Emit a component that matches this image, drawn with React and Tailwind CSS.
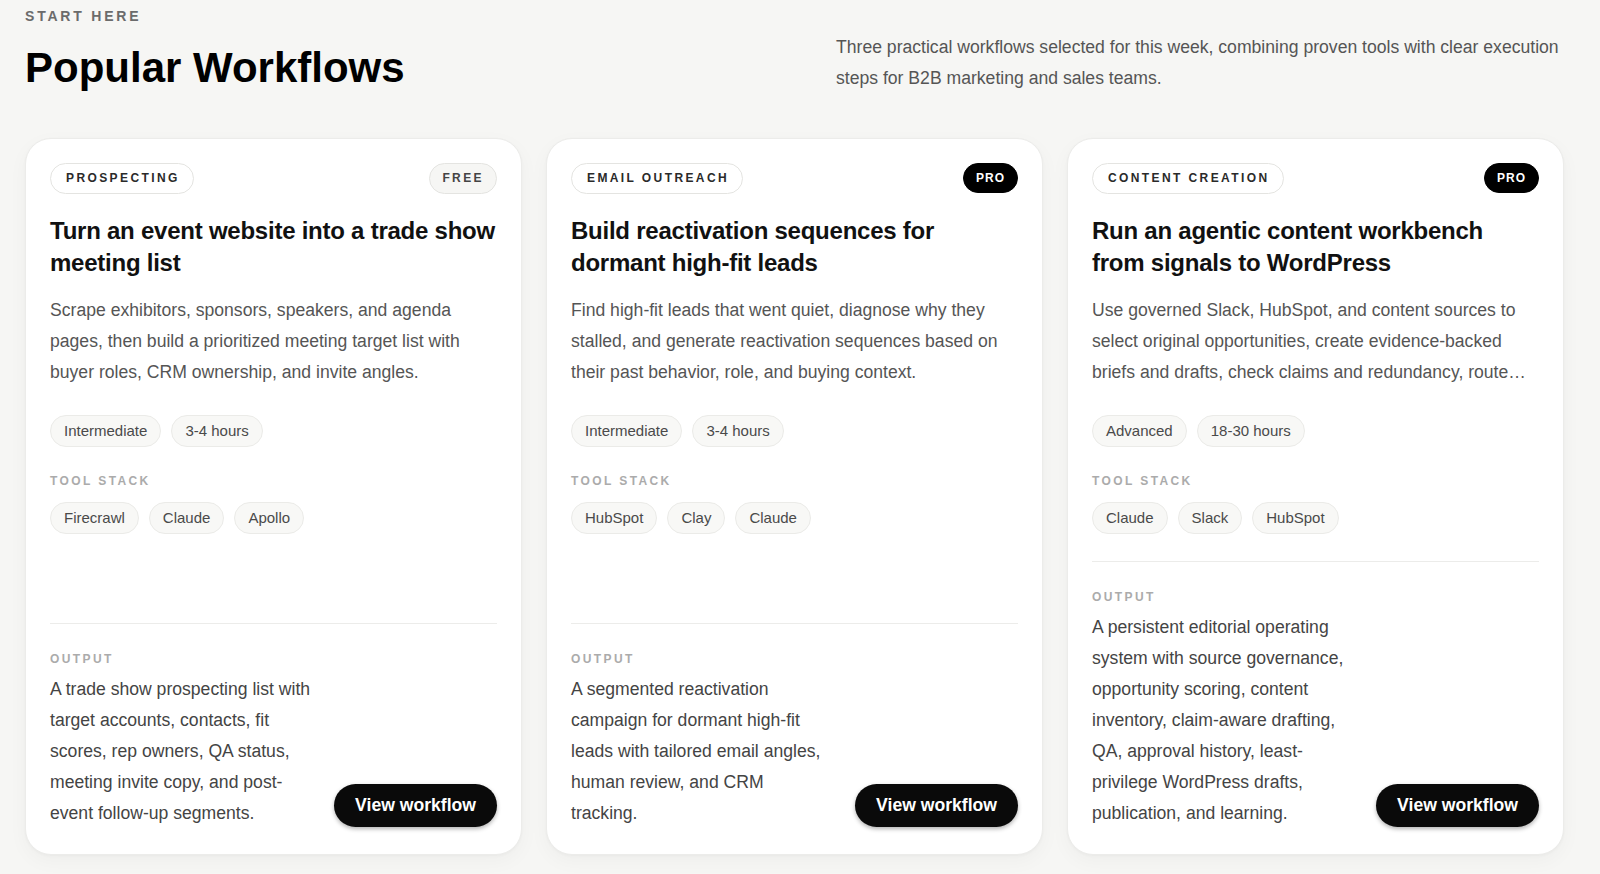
import React from "react";

const cards = [
  {
    category: "PROSPECTING",
    tier: "FREE",
    title: "Turn an event website into a trade show meeting list",
    desc: "Scrape exhibitors, sponsors, speakers, and agenda pages, then build a prioritized meeting target list with buyer roles, CRM ownership, and invite angles.",
    meta: ["Intermediate", "3-4 hours"],
    tools: ["Firecrawl", "Claude", "Apollo"],
    output:
      "A trade show prospecting list with target accounts, contacts, fit scores, rep owners, QA status, meeting invite copy, and post-event follow-up segments.",
  },
  {
    category: "EMAIL OUTREACH",
    tier: "PRO",
    title: "Build reactivation sequences for dormant high-fit leads",
    desc: "Find high-fit leads that went quiet, diagnose why they stalled, and generate reactivation sequences based on their past behavior, role, and buying context.",
    meta: ["Intermediate", "3-4 hours"],
    tools: ["HubSpot", "Clay", "Claude"],
    output:
      "A segmented reactivation campaign for dormant high-fit leads with tailored email angles, human review, and CRM tracking.",
  },
  {
    category: "CONTENT CREATION",
    tier: "PRO",
    title: "Run an agentic content workbench from signals to WordPress",
    desc: "Use governed Slack, HubSpot, and content sources to select original opportunities, create evidence-backed briefs and drafts, check claims and redundancy, route approvals, and publish least-privilege WordPress drafts.",
    meta: ["Advanced", "18-30 hours"],
    tools: ["Claude", "Slack", "HubSpot"],
    output:
      "A persistent editorial operating system with source governance, opportunity scoring, content inventory, claim-aware drafting, QA, approval history, least-privilege WordPress drafts, publication, and learning.",
  },
];

function Chip({ children }) {
  return (
    <span className="flex h-8 items-center rounded-full border border-[#ebebe8] bg-[#f8f8f6] px-[13px] text-[15px] text-[#4a4a4a]">
      {children}
    </span>
  );
}

function Card({ c }) {
  return (
    <div className="flex flex-col rounded-[26px] border border-[#ececea] bg-white px-6 pb-[25px] pt-6 shadow-[0_1px_3px_rgba(0,0,0,0.03),0_6px_20px_rgba(0,0,0,0.035)]">
      <div className="flex items-center justify-between">
        <span className="flex h-[31px] items-center rounded-full border border-[#e4e4e1] bg-white pl-[15px] pr-[13px] text-[12px] font-bold tracking-[0.2em] text-[#2a2a2a]">
          {c.category}
        </span>
        {c.tier === "PRO" ? (
          <span className="flex h-[30px] items-center rounded-full border border-black bg-black px-[12px] text-[12px] font-bold tracking-[0.08em] text-white">
            PRO
          </span>
        ) : (
          <span className="flex h-[31px] items-center rounded-full border border-[#e4e4e1] bg-[#f6f6f4] px-[12px] text-[12px] font-bold tracking-[0.2em] text-[#444]">
            {c.tier}
          </span>
        )}
      </div>
      <h3 className="mt-[21px] text-[24px] font-bold leading-[32.6px] tracking-[-0.01em] text-[#111]">
        {c.title}
      </h3>
      <p className="mt-[15px] line-clamp-3 text-[17.6px] leading-[31px] text-[#555]">
        {c.desc}
      </p>
      <div className="mt-[27px] flex gap-[10px]">
        {c.meta.map((m) => (
          <Chip key={m}>{m}</Chip>
        ))}
      </div>
      <div className="mt-[26px] text-[12px] font-bold leading-4 tracking-[0.2em] text-[#ababab]">
        TOOL STACK
      </div>
      <div className="mt-[13.5px] flex gap-[10px]">
        {c.tools.map((t) => (
          <Chip key={t}>{t}</Chip>
        ))}
      </div>
      <div className="mt-auto pt-[26.5px]">
        <div className="border-t border-[#ececea] pt-[27px]">
          <div className="flex items-end justify-between">
            <div className="w-[263px]">
              <div className="text-[12px] font-bold leading-4 tracking-[0.2em] text-[#ababab]">
                OUTPUT
              </div>
              <p className="mt-[7px] text-[17.6px] leading-[31px] text-[#444]">
                {c.output}
              </p>
            </div>
            <button className="mb-[2px] flex h-[43px] shrink-0 items-center rounded-full bg-[#0a0a0a] px-[21px] text-[17.6px] font-bold text-white shadow-[0_2px_4px_rgba(0,0,0,0.3)]">
              View workflow
            </button>
          </div>
        </div>
      </div>
    </div>
  );
}

export default function App() {
  return (
    <div
      className="min-h-[874px] w-[1600px] bg-[#f6f6f4] pl-[25px] pt-[6px]"
      style={{ fontFamily: '"Liberation Sans", Arial, sans-serif' }}
    >
      <div className="w-[1539px]">
        <div className="flex items-start justify-between">
          <div>
            <div className="text-[14px] font-bold leading-5 tracking-[0.2em] text-[#6b6b6b]">
              START HERE
            </div>
            <h1 className="mt-[21px] text-[42px] font-bold leading-[42px] text-black">
              Popular Workflows
            </h1>
          </div>
          <p className="mt-[26px] w-[728px] text-[17.6px] leading-[30.8px] text-[#555]">
            Three practical workflows selected for this week, combining proven tools with clear execution steps for B2B marketing and sales teams.
          </p>
        </div>
        <div className="mt-[44px] grid grid-cols-3 gap-6">
          {cards.map((c) => (
            <Card key={c.title} c={c} />
          ))}
        </div>
      </div>
    </div>
  );
}
